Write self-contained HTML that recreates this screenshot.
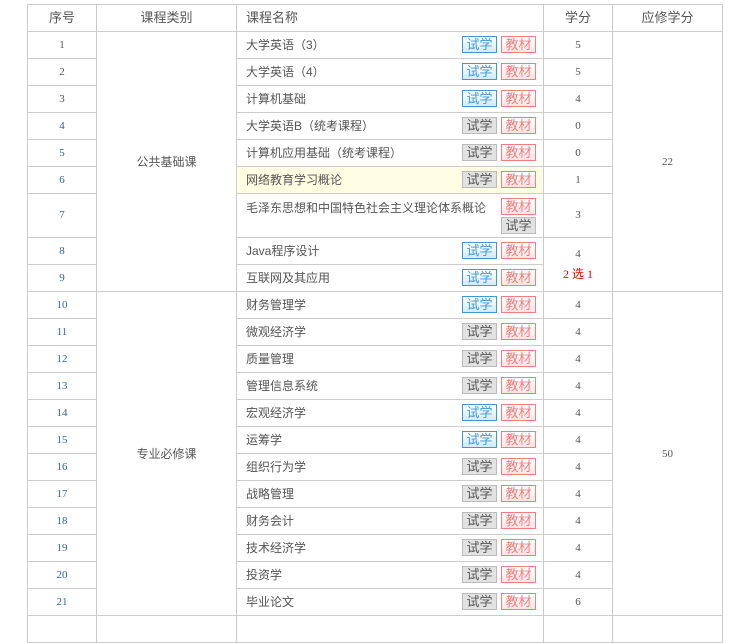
<!DOCTYPE html>
<html><head><meta charset="utf-8"><style>
body{margin:0;background:#fff;font-family:"Liberation Serif","Noto Sans CJK SC",serif;font-size:12px;color:#555}
table{position:absolute;left:27px;top:4px;border-collapse:collapse;table-layout:fixed;width:695px}
td,th{border:1px solid #ccc;padding:0;height:26px;line-height:26px;text-align:center;font-weight:normal;font-family:"Liberation Sans","Noto Sans CJK SC",sans-serif}
th{font-size:13px;color:#555}
td.n{font-family:"Liberation Serif",serif;font-size:11px;color:#336699}
td.c{font-family:"Liberation Serif",serif;font-size:11px;color:#555}
td.nm{text-align:left;padding-left:9px;position:relative;font-size:12px;color:#555}
.b{position:absolute;top:4px;height:15px;line-height:15px;width:33px;font-size:13px;text-align:center;border:1px solid}
.t{right:46px}.m{right:7px}
.bl{border-color:#3a9ad9;color:#3a9ad9;background:linear-gradient(#fff,#d3eafa)}
.gr{border-color:#bbb;color:#555;background:#e2e2e2}
.rd{border-color:#f08080;color:#f08080;background:linear-gradient(#fff,#fde4e4)}
.cat{font-size:12px;color:#555}
</style></head><body>
<table>
<colgroup><col style="width:69px"><col style="width:140px"><col style="width:307px"><col style="width:69px"><col style="width:110px"></colgroup>
<tr><th>序号</th><th>课程类别</th><th style="text-align:left;padding-left:9px">课程名称</th><th>学分</th><th>应修学分</th></tr>
<tr><td class="n" style="color:#555">1</td><td class="cat" rowspan="9">公共基础课</td><td class="nm">大学英语（3）<span class="b t bl">试学</span><span class="b m rd">教材</span></td><td class="c">5</td><td class="c" rowspan="9">22</td></tr>
<tr><td class="n" style="color:#555">2</td><td class="nm">大学英语（4）<span class="b t bl">试学</span><span class="b m rd">教材</span></td><td class="c">5</td></tr>
<tr><td class="n" style="color:#555">3</td><td class="nm">计算机基础<span class="b t bl">试学</span><span class="b m rd">教材</span></td><td class="c">4</td></tr>
<tr><td class="n">4</td><td class="nm">大学英语B（统考课程）<span class="b t gr">试学</span><span class="b m rd">教材</span></td><td class="c">0</td></tr>
<tr><td class="n">5</td><td class="nm">计算机应用基础（统考课程）<span class="b t gr">试学</span><span class="b m rd">教材</span></td><td class="c">0</td></tr>
<tr><td class="n">6</td><td class="nm" style="background:#fffde2">网络教育学习概论<span class="b t gr">试学</span><span class="b m rd">教材</span></td><td class="c">1</td></tr>
<tr><td class="n" style="height:43px;line-height:43px">7</td><td class="nm" style="vertical-align:top;padding-top:2px;height:41px;line-height:24px;padding-right:50px;white-space:nowrap">毛泽东思想和中国特色社会主义理论体系概论<span class="b m rd">教材</span><span class="b m gr" style="top:23px">试学</span></td><td class="c" style="line-height:43px">3</td></tr>
<tr><td class="n">8</td><td class="nm">Java程序设计<span class="b t bl">试学</span><span class="b m rd">教材</span></td><td class="c" rowspan="2" style="line-height:20px">4<br><span style="color:#e00;font-size:12px">2 选 1</span></td></tr>
<tr><td class="n">9</td><td class="nm">互联网及其应用<span class="b t bl">试学</span><span class="b m rd">教材</span></td></tr>
<tr><td class="n">10</td><td class="cat" rowspan="12">专业必修课</td><td class="nm">财务管理学<span class="b t bl">试学</span><span class="b m rd">教材</span></td><td class="c">4</td><td class="c" rowspan="12">50</td></tr>
<tr><td class="n">11</td><td class="nm">微观经济学<span class="b t gr">试学</span><span class="b m rd">教材</span></td><td class="c">4</td></tr>
<tr><td class="n">12</td><td class="nm">质量管理<span class="b t gr">试学</span><span class="b m rd">教材</span></td><td class="c">4</td></tr>
<tr><td class="n">13</td><td class="nm">管理信息系统<span class="b t gr">试学</span><span class="b m rd">教材</span></td><td class="c">4</td></tr>
<tr><td class="n">14</td><td class="nm">宏观经济学<span class="b t bl">试学</span><span class="b m rd">教材</span></td><td class="c">4</td></tr>
<tr><td class="n">15</td><td class="nm">运筹学<span class="b t bl">试学</span><span class="b m rd">教材</span></td><td class="c">4</td></tr>
<tr><td class="n">16</td><td class="nm">组织行为学<span class="b t gr">试学</span><span class="b m rd">教材</span></td><td class="c">4</td></tr>
<tr><td class="n">17</td><td class="nm">战略管理<span class="b t gr">试学</span><span class="b m rd">教材</span></td><td class="c">4</td></tr>
<tr><td class="n">18</td><td class="nm">财务会计<span class="b t gr">试学</span><span class="b m rd">教材</span></td><td class="c">4</td></tr>
<tr><td class="n">19</td><td class="nm">技术经济学<span class="b t gr">试学</span><span class="b m rd">教材</span></td><td class="c">4</td></tr>
<tr><td class="n">20</td><td class="nm">投资学<span class="b t gr">试学</span><span class="b m rd">教材</span></td><td class="c">4</td></tr>
<tr><td class="n">21</td><td class="nm">毕业论文<span class="b t gr">试学</span><span class="b m rd">教材</span></td><td class="c">6</td></tr>
<tr><td class="n"></td><td></td><td></td><td></td><td></td></tr>
</table>
</body></html>
